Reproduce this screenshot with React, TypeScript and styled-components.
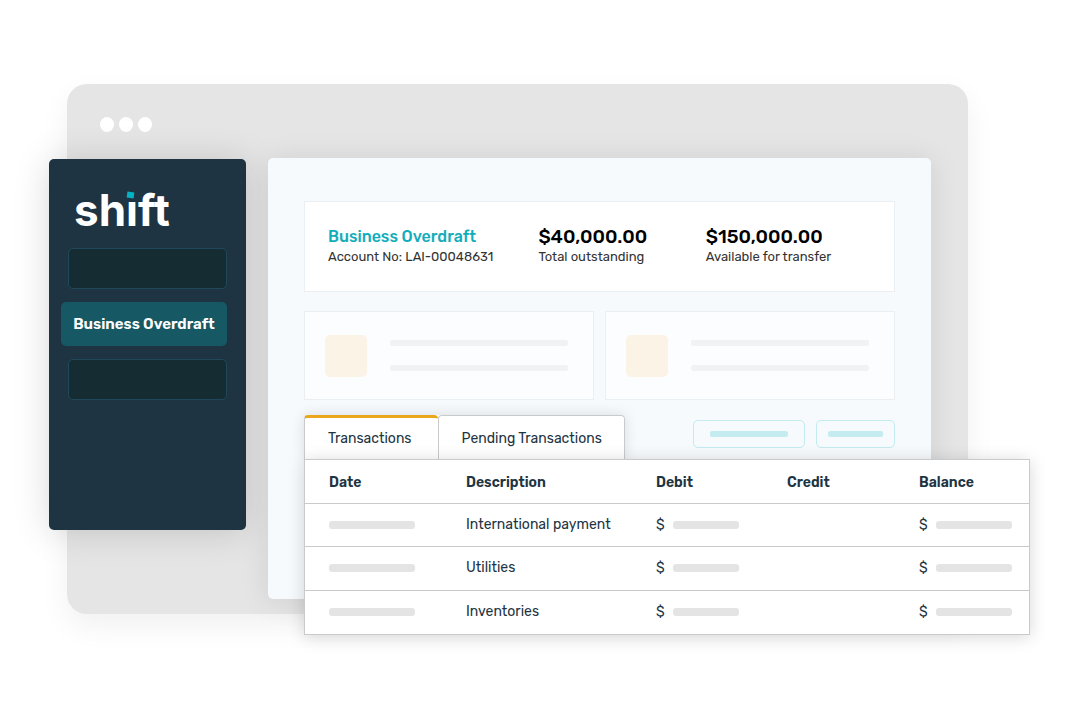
import React from "react";
import styled, { createGlobalStyle } from "styled-components";

const GlobalStyle = createGlobalStyle`
  * { box-sizing: border-box; }
  body {
    margin: 0;
    background: #ffffff;
    color: #1e3442;
    font-family: Rubik, Roboto, "Liberation Sans", sans-serif;
  }
  button { font: inherit; color: inherit; margin: 0; cursor: pointer; }
`;

const Page = styled.main`
  padding: 84px 112px 85px 67px;
`;

const Window = styled.section`
  background: #e5e5e5;
  border-radius: 20px;
  padding: 0 37px 15px 0;
  box-shadow: 0 12px 30px rgba(0, 0, 0, 0.06);
`;

const TitleBar = styled.header`
  display: flex;
  gap: 5px;
  height: 74px;
  padding: 33px 33px 0;
`;

const Dot = styled.span`
  width: 14px;
  height: 15px;
  border-radius: 50%;
  background: #ffffff;
`;

const Body = styled.div`
  display: flex;
  align-items: flex-start;
  gap: 22px;
`;

const Sidebar = styled.nav`
  flex: 0 0 197px;
  min-height: 371px;
  margin: 1px 0 0 -18px;
  padding: 27px 19px 24px 12px;
  border-radius: 5px;
  background: #1e3442;
  box-shadow: 0 2px 36px rgba(0, 0, 0, 0.15);
`;

const Logo = styled.div`
  height: 62px;
  padding-left: 13px;
  font-family: Inter, "Liberation Sans", sans-serif;
  font-size: 44px;
  line-height: 48px;
  font-weight: 700;
  color: #ffffff;
`;

const DottedI = styled.span`
  position: relative;

  &::before {
    content: "";
    position: absolute;
    left: 0;
    top: 5px;
    width: 12px;
    height: 13px;
    background: #1e3442;
  }

  &::after {
    content: "";
    position: absolute;
    left: 1px;
    top: 9px;
    width: 7px;
    height: 6px;
    background: #04b3c3;
    transform: rotate(8deg);
  }
`;

const NavList = styled.div`
  display: flex;
  flex-direction: column;
  gap: 13px;
`;

const NavPlaceholder = styled.div`
  height: 41px;
  margin-left: 7px;
  border: 1px solid #21485a;
  border-radius: 5px;
  background: #162c33;
`;

const NavButton = styled.button`
  height: 44px;
  padding: 0;
  border: 0;
  border-radius: 5px;
  background: #165863;
  color: #ffffff;
  font-size: 15px;
  font-weight: 600;
`;

const Panel = styled.div`
  flex: 1;
  min-width: 0;
  padding: 43px 36px 0;
  border-radius: 5px;
  background: #f6fafd;
  box-shadow: 0 2px 30px rgba(0, 0, 0, 0.1);
`;

const Summary = styled.section`
  display: grid;
  grid-template-columns: 210fr 167fr 165fr;
  height: 91px;
  padding: 25px 23px 0;
  border: 1px solid #e9eff3;
  background: #ffffff;
`;

const AccountName = styled.h1`
  margin: 0;
  font-size: 16px;
  line-height: 20px;
  font-weight: 500;
  color: #12adba;
`;

const Amount = styled.p`
  margin: 0;
  font-size: 19px;
  line-height: 20px;
  font-weight: 500;
  color: #000000;
`;

const Caption = styled.p`
  margin: 0;
  font-size: 13px;
  line-height: 20px;
  color: #333333;
  white-space: nowrap;
`;

const Cards = styled.div`
  display: grid;
  grid-template-columns: 1fr 1fr;
  gap: 11px;
  margin: 19px 0 15px;
`;

const Card = styled.div`
  display: flex;
  align-items: center;
  gap: 23px;
  height: 89px;
  padding: 0 25px 0 20px;
  border: 1px solid #e9eff3;
  background: #fcfdff;
`;

const Thumb = styled.span`
  flex: 0 0 42px;
  height: 42px;
  border-radius: 5px;
  background: #faf3e6;
`;

const Lines = styled.div`
  flex: 1;
  display: flex;
  flex-direction: column;
  gap: 19px;
`;

const Line = styled.span`
  height: 6px;
  border-radius: 2px;
  background: #f1f2f4;
`;

const Toolbar = styled.div`
  display: flex;
  justify-content: space-between;
`;

const Tabs = styled.div`
  display: flex;
  background: #ffffff;
  border-radius: 4px 4px 0 0;
  box-shadow: 0 0 14px rgba(0, 0, 0, 0.12);
`;

const Tab = styled.button<{ $active?: boolean }>`
  height: 44px;
  padding: ${(p) => (p.$active ? "0 26px 0 23px" : "2px 22px 0 23px")};
  border: 1px solid #c9cacc;
  border-bottom: 0;
  border-top: ${(p) => (p.$active ? "3px solid #eaa71c" : "1px solid #c9cacc")};
  border-right-width: ${(p) => (p.$active ? "0" : "1px")};
  border-radius: 4px 4px 0 0;
  background: #ffffff;
  font-size: 14px;
  white-space: nowrap;
`;

const Actions = styled.div`
  display: flex;
  gap: 11px;
  padding-top: 5px;
`;

const Action = styled.button<{ $bar: number }>`
  display: flex;
  align-items: center;
  height: 28px;
  padding: 0 ${(p) => (p.$bar > 60 ? 16 : 11)}px;
  border: 1px solid #c3ebf0;
  border-radius: 5px;
  background: transparent;

  &::before {
    content: "";
    width: ${(p) => p.$bar}px;
    height: 6px;
    border-radius: 2px;
    background: #c3ebf0;
  }
`;

const Ledger = styled.div`
  position: relative;
  margin: 0 -135px -36px 0;
  border: 1px solid #c9cacc;
  background: #ffffff;
  box-shadow: 0 2px 16px rgba(0, 0, 0, 0.16);
`;

const Table = styled.table`
  width: 100%;
  height: 174px;
  table-layout: fixed;
  border-collapse: separate;
  border-spacing: 0;
  font-size: 14px;
  line-height: 18px;

  tr:not(:last-child) > td,
  thead th {
    border-bottom: 1px solid #c9cacc;
  }
`;

const Head = styled.th<{ $width?: number }>`
  width: ${(p) => (p.$width ? `${p.$width}px` : "auto")};
  height: 44px;
  padding: 2px 0 0 24px;
  text-align: left;
  font-weight: 600;
`;

const Cell = styled.td`
  height: 43px;
  padding: 0 0 0 24px;
  white-space: nowrap;
`;

const Value = styled.span<{ $gap?: number }>`
  display: flex;
  align-items: center;
  gap: ${(p) => p.$gap ?? 0}px;
`;

const Bar = styled.span<{ $width: number }>`
  width: ${(p) => p.$width}px;
  height: 8px;
  border-radius: 3px;
  background: #e4e4e4;
`;

const columns: { label: string; width?: number }[] = [
  { label: "Date", width: 137 },
  { label: "Description", width: 190 },
  { label: "Debit", width: 131 },
  { label: "Credit", width: 132 },
  { label: "Balance" },
];

const rows = ["International payment", "Utilities", "Inventories"];

const PlaceholderCard = () => (
  <Card>
    <Thumb />
    <Lines>
      <Line />
      <Line />
    </Lines>
  </Card>
);

export default function App() {
  return (
    <Page>
      <GlobalStyle />
      <Window>
        <TitleBar>
          <Dot />
          <Dot />
          <Dot />
        </TitleBar>
        <Body>
          <Sidebar>
            <Logo>
              sh<DottedI>i</DottedI>ft
            </Logo>
            <NavList>
              <NavPlaceholder />
              <NavButton type="button">Business Overdraft</NavButton>
              <NavPlaceholder />
            </NavList>
          </Sidebar>
          <Panel>
            <Summary>
              <div>
                <AccountName>Business Overdraft</AccountName>
                <Caption>Account No: LAI-00048631</Caption>
              </div>
              <div>
                <Amount>$40,000.00</Amount>
                <Caption>Total outstanding</Caption>
              </div>
              <div>
                <Amount>$150,000.00</Amount>
                <Caption>Available for transfer</Caption>
              </div>
            </Summary>
            <Cards>
              <PlaceholderCard />
              <PlaceholderCard />
            </Cards>
            <Toolbar>
              <Tabs role="tablist">
                <Tab type="button" role="tab" aria-selected="true" $active>
                  Transactions
                </Tab>
                <Tab type="button" role="tab" aria-selected="false">
                  Pending Transactions
                </Tab>
              </Tabs>
              <Actions>
                <Action type="button" aria-label="Filter" $bar={78} />
                <Action type="button" aria-label="Export" $bar={55} />
              </Actions>
            </Toolbar>
            <Ledger>
              <Table>
                <thead>
                  <tr>
                    {columns.map((c) => (
                      <Head key={c.label} scope="col" $width={c.width}>
                        {c.label}
                      </Head>
                    ))}
                  </tr>
                </thead>
                <tbody>
                  {rows.map((name) => (
                    <tr key={name}>
                      <Cell>
                        <Value>
                          <Bar $width={86} />
                        </Value>
                      </Cell>
                      <Cell>{name}</Cell>
                      <Cell>
                        <Value $gap={8}>
                          $<Bar $width={66} />
                        </Value>
                      </Cell>
                      <Cell />
                      <Cell>
                        <Value $gap={8}>
                          $<Bar $width={76} />
                        </Value>
                      </Cell>
                    </tr>
                  ))}
                </tbody>
              </Table>
            </Ledger>
          </Panel>
        </Body>
      </Window>
    </Page>
  );
}
